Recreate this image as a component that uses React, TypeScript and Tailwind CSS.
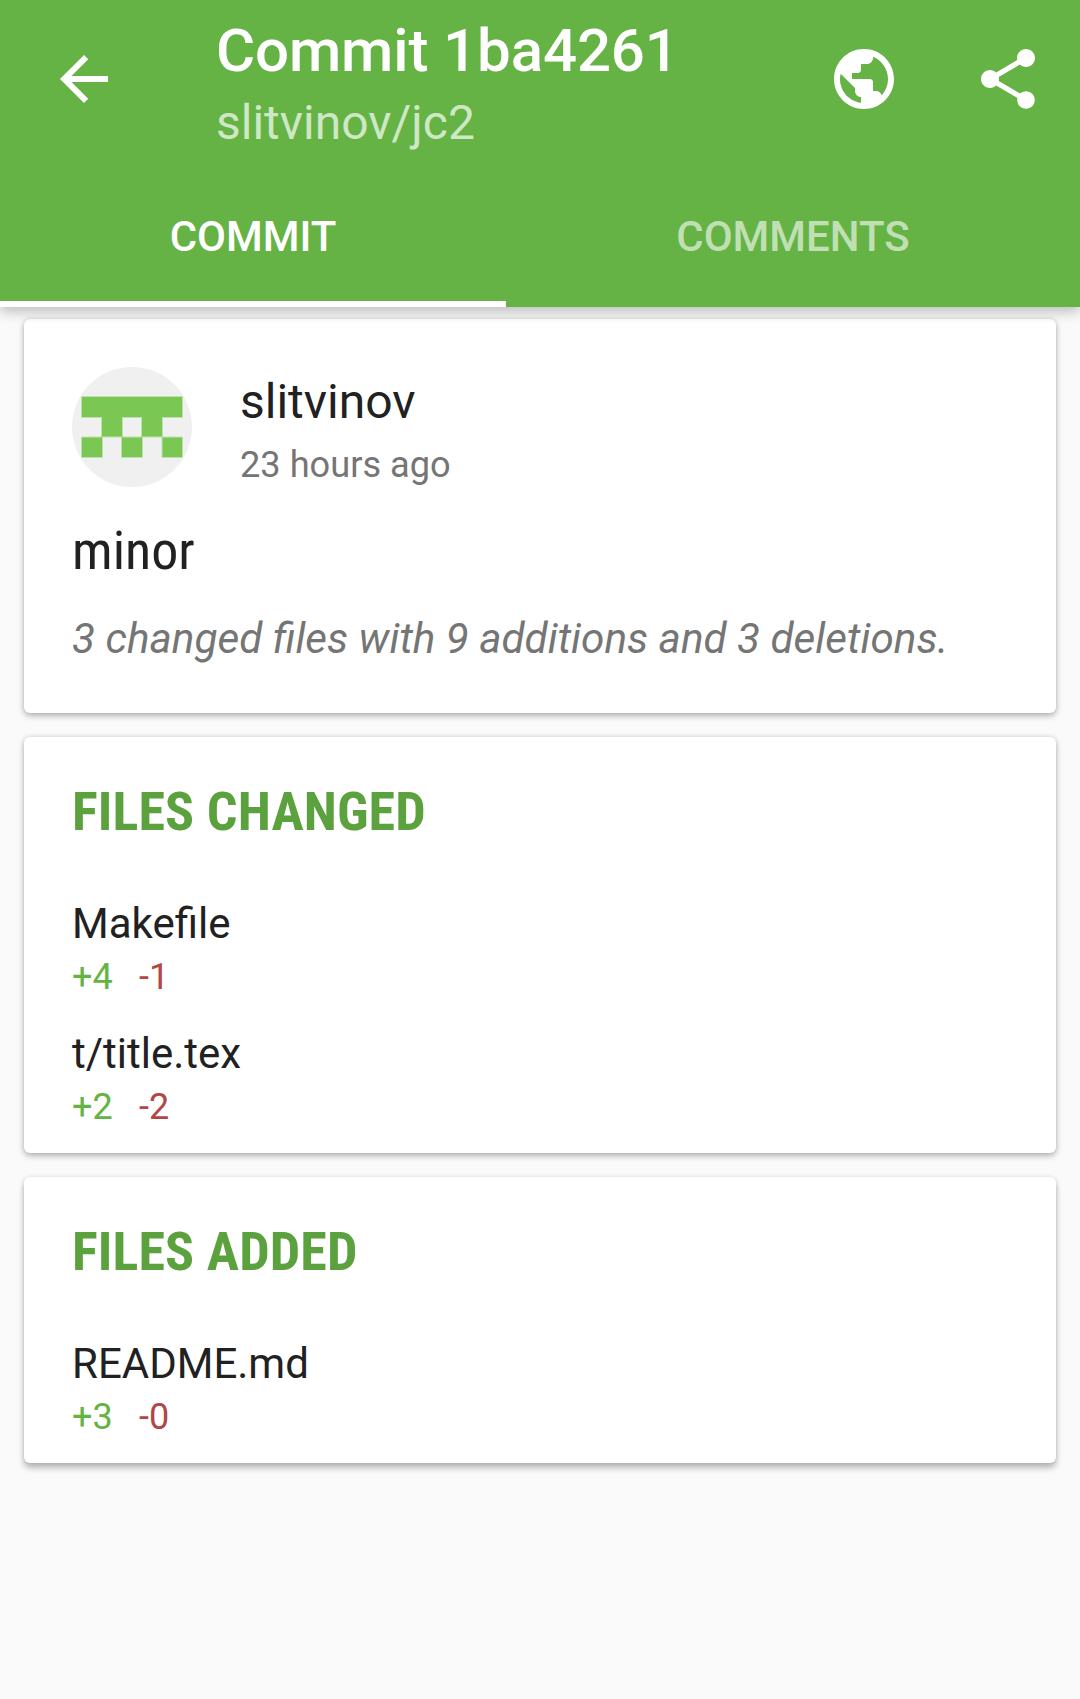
import React from "react";

const CARD = "mx-6 rounded-[6px] bg-white px-12";
const SHADOW = "shadow-[0_3px_6px_rgba(0,0,0,0.26),0_0_5px_rgba(0,0,0,0.12)]";
const SHADOW_LAST = "shadow-[0_5px_6px_rgba(0,0,0,0.26),0_0_5px_rgba(0,0,0,0.12)]";
const HEADING = "h-[70px] text-[54px] font-bold leading-[70px] tracking-[0.1px] text-[#5ba23f] [font-stretch:75%]";

function FileRow({ name, add, del, className }: { name: string; add: string; del: string; className: string }) {
  return (
    <div className={className}>
      <div className="h-[54px] whitespace-nowrap text-[42px] leading-[54px]">{name}</div>
      <div className="flex h-[52px] text-[36px] leading-[52px]">
        <span className="w-[67px] text-[#65b345]">{add}</span>
        <span className="text-[#b34545]">{del}</span>
      </div>
    </div>
  );
}

export default function App() {
  return (
    <div className="flex h-[1699px] w-[1080px] flex-col overflow-hidden bg-[#fafafa] font-['Roboto',sans-serif] text-[#212121]">
      <header className="relative z-10 h-[307px] shrink-0 bg-[#65b345] text-white shadow-[0_5px_12px_rgba(0,0,0,0.24)]">
        <div className="flex h-[159px]">
          <svg className="ml-12 mt-[43px] size-[72px] shrink-0" viewBox="0 0 24 24" fill="currentColor"><path d="M20 11H7.83l5.59-5.59L12 4l-8 8 8 8 1.41-1.41L7.83 13H20v-2z" /></svg>
          <div className="ml-24 mt-[15px] w-[600px]">
            <div className="h-[72px] text-[60px] font-medium leading-[72px] tracking-[-0.12px]">Commit 1ba4261</div>
            <div className="h-[72px] text-[48px] leading-[72px] text-white/70">slitvinov/jc2</div>
          </div>
          <svg className="ml-3 mt-[43px] size-[72px] shrink-0" viewBox="0 0 24 24" fill="currentColor"><path d="M12 2C6.48 2 2 6.48 2 12s4.48 10 10 10 10-4.48 10-10S17.52 2 12 2zm-1 17.93c-3.95-.49-7-3.85-7-7.93 0-.62.08-1.21.21-1.79L9 15v1c0 1.1.9 2 2 2v1.93zm6.9-2.54c-.26-.81-1-1.39-1.9-1.39h-1v-3c0-.55-.45-1-1-1H8v-2h2c.55 0 1-.45 1-1V7h2c1.1 0 2-.9 2-2v-.41c2.93 1.19 5 4.06 5 7.41 0 2.08-.8 3.97-2.1 5.39z" /></svg>
          <svg className="ml-[72px] mt-[43px] size-[72px] shrink-0" viewBox="0 0 24 24" fill="currentColor"><path d="M18 16.08c-.76 0-1.44.3-1.96.77L8.91 12.7c.05-.23.09-.46.09-.7s-.04-.47-.09-.7l7.05-4.11c.54.5 1.25.81 2.04.81 1.66 0 3-1.34 3-3s-1.34-3-3-3-3 1.34-3 3c0 .24.04.47.09.7L8.04 9.81C7.5 9.31 6.79 9 6 9c-1.66 0-3 1.34-3 3s1.34 3 3 3c.79 0 1.5-.31 2.04-.81l7.12 4.16c-.05.21-.08.43-.08.65 0 1.61 1.31 2.92 2.92 2.92s2.92-1.31 2.92-2.92-1.31-2.92-2.92-2.92z" /></svg>
        </div>
        <nav className="flex h-[148px] text-center text-[42px] font-medium leading-[156px]">
          <div className="w-[506px] border-b-[6px] border-white">COMMIT</div>
          <div className="w-[574px] text-white/60">COMMENTS</div>
        </nav>
      </header>
      <main className="flex flex-col gap-6 pt-3">
        <section className={`${CARD} ${SHADOW} h-[394px] pt-12`}>
          <div className="flex h-[120px]">
            <svg className="mr-12 size-[120px]" viewBox="0 0 120 120">
              <circle cx="60" cy="60" r="60" fill="#f0f0f0" />
              <path
                fill="#7ac753"
                stroke="#bfe2ad"
                strokeWidth="1"
                fillRule="evenodd"
                d="M9.5 29.5h101v21H90.5v19.5h20v20.500h-20.500v-20.500H70.500v20.500H49.500v-20.500H30.500v20.500H9.500v-20.500H29.500v-19.500H9.500z M50.500 50.500v19.500h19v-19.500z"
              />
            </svg>
            <div>
              <div className="mt-1 h-[63px] text-[48px] leading-[62px]">slitvinov</div>
              <div className="h-[62px] text-[36.200px] leading-[62px] text-[#757575]">23 hours ago</div>
            </div>
          </div>
          <div className="mt-[29px] h-[70px] text-[54px] leading-[70px] [font-stretch:75%]">minor</div>
          <div className="mt-[23px] whitespace-nowrap text-[42.280px] italic leading-[60px] text-[#757575]">3 changed files with 9 additions and 3 deletions.</div>
        </section>
        <section className={`${CARD} ${SHADOW} h-[416px] pt-10`}>
          <h2 className={HEADING}>FILES CHANGED</h2>
          <FileRow className="mt-[50px]" name="Makefile" add="+4" del="-1" />
          <FileRow className="mt-6" name="t/title.tex" add="+2" del="-2" />
        </section>
        <section className={`${CARD} ${SHADOW_LAST} h-[286px] pt-10`}>
          <h2 className={HEADING}>FILES ADDED</h2>
          <FileRow className="mt-[50px]" name="README.md" add="+3" del="-0" />
        </section>
      </main>
    </div>
  );
}
